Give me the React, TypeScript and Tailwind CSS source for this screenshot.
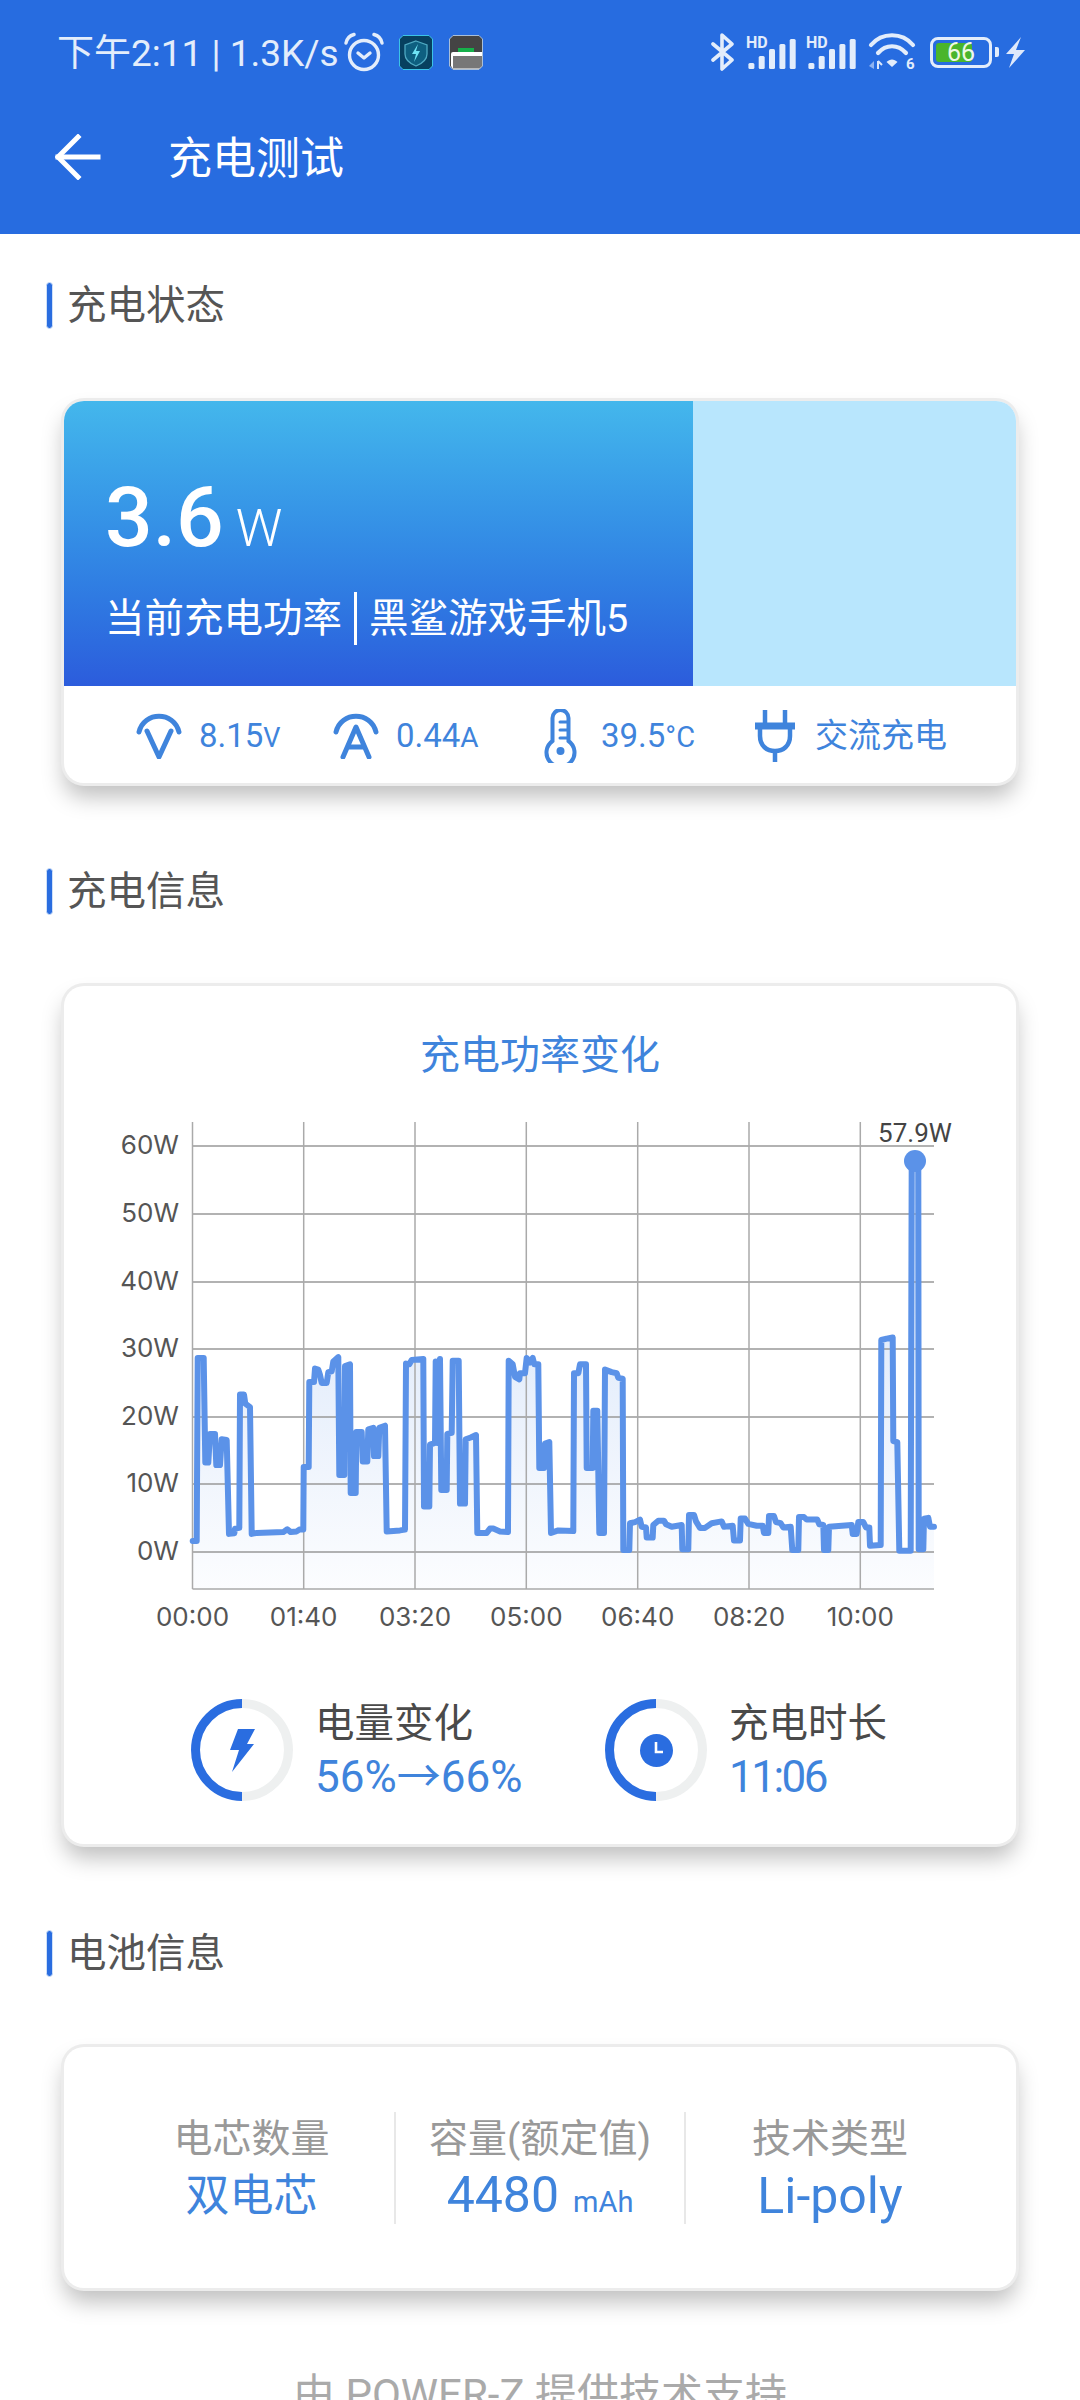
import { ReactNode } from 'react';

const SANS = 'font-["Roboto","Noto_Sans_CJK_SC",sans-serif]';

// Trace read off the reference, in crop units: x = 100 + cx / 3, y = 1100 + cy / 2.8
const LEFT_TRACE = [
  278, 1235, 290, 1235, 293, 722, 311, 722, 316, 1015, 325, 1015, 330, 935, 345, 935, 349, 1022, 360, 1022, 365, 950,
  380, 952, 387, 1215, 403, 1213, 405, 1200, 418, 1198, 420, 825, 432, 825, 436, 850, 450, 860, 455, 1215, 470, 1212,
  550, 1210, 562, 1202, 572, 1210, 590, 1208, 598, 1203, 610, 1203, 611, 1028, 626, 1028, 628, 790, 642, 790, 645, 752,
  655, 755, 660, 770, 665, 792, 680, 792, 685, 762, 695, 760, 700, 732, 715, 720, 718, 1050, 733, 1050, 735, 745, 750,
  740, 752, 1100, 767, 1100, 769, 930, 785, 930, 788, 1012, 802, 1012, 805, 922, 820, 918, 822, 997, 835, 997, 838, 918,
  855, 912, 860, 1208, 900, 1205, 915, 1203, 918, 738, 928, 740, 935, 728, 970, 725, 972, 1138, 988, 1138, 990, 965,
  1005, 960, 1007, 732, 1012, 960, 1020, 725, 1024, 1092, 1040, 1092, 1042, 935, 1055, 932, 1058, 730, 1076, 730, 1080,
  1130, 1095, 1130, 1097, 950, 1112, 945, 1128, 938, 1132, 1212, 1160, 1212, 1170, 1200, 1180, 1200, 1200, 1208, 1224,
  1210, 1226, 730, 1238, 740, 1245, 775, 1258, 782, 1260, 765, 1275, 765, 1280, 722, 1290, 735, 1298, 722, 1303, 740,
  1315, 740, 1318, 1030,
];
// Same trace from the right-hand crop: x = 540 + cx / 3
const RIGHT_TRACE = [
  12, 1030, 15, 962, 28, 958, 33, 1212, 55, 1205, 100, 1207, 102, 765, 115, 765, 120, 740, 138, 740, 140, 1030, 158,
  1030, 160, 870, 172, 870, 178, 1212, 192, 1212, 195, 755, 215, 762, 230, 765, 235, 778, 248, 780, 250, 1260, 268, 1260,
  270, 1185, 285, 1182, 300, 1175, 305, 1195, 318, 1197, 320, 1225, 338, 1225, 340, 1190, 355, 1178, 372, 1178, 378,
  1188, 395, 1195, 425, 1190, 427, 1258, 445, 1258, 447, 1162, 462, 1162, 468, 1180, 480, 1198, 495, 1198, 515, 1185,
  545, 1180, 552, 1195, 578, 1192, 582, 1233, 600, 1233, 602, 1172, 615, 1172, 625, 1187, 650, 1192, 668, 1192, 672,
  1212, 685, 1212, 687, 1165, 702, 1165, 708, 1182, 722, 1185, 730, 1197, 752, 1195, 757, 1260, 775, 1260, 777, 1168,
  792, 1168, 800, 1175, 832, 1175, 838, 1188, 850, 1190, 852, 1260, 865, 1260, 867, 1195, 935, 1190, 938, 1215, 950,
  1215, 955, 1182, 970, 1182, 978, 1197, 988, 1197, 990, 1248, 1022, 1246, 1024, 672, 1040, 668, 1058, 665, 1060, 955,
  1072, 958, 1078, 1262, 1112, 1262, 1115, 170, 1135, 170, 1136, 1258, 1150, 1258, 1152, 1172, 1165, 1170, 1170, 1195,
  1182, 1195,
];

// The svg starts at page x=64, y=1110
const CHART_X = (px: number) => px - 64;
const CHART_Y = (py: number) => py - 1110;

function tracePoints(): string {
  const out: string[] = [];
  for (let i = 0; i < LEFT_TRACE.length; i += 2) {
    out.push(`${CHART_X(100 + LEFT_TRACE[i] / 3).toFixed(1)},${CHART_Y(1100 + LEFT_TRACE[i + 1] / 2.8).toFixed(1)}`);
  }
  for (let i = 0; i < RIGHT_TRACE.length; i += 2) {
    out.push(`${CHART_X(540 + RIGHT_TRACE[i] / 3).toFixed(1)},${CHART_Y(1100 + RIGHT_TRACE[i + 1] / 2.8).toFixed(1)}`);
  }
  return out.join(' ');
}

const GRID_Y = [
  { y: 1146, label: '60W' },
  { y: 1214, label: '50W' },
  { y: 1282, label: '40W' },
  { y: 1349, label: '30W' },
  { y: 1417, label: '20W' },
  { y: 1484, label: '10W' },
  { y: 1552, label: '0W' },
];
const GRID_X = [
  { x: 192.5, label: '00:00' },
  { x: 303.7, label: '01:40' },
  { x: 415, label: '03:20' },
  { x: 526.3, label: '05:00' },
  { x: 637.7, label: '06:40' },
  { x: 749, label: '08:20' },
  { x: 860.3, label: '10:00' },
];

function PowerChart() {
  const pts = tracePoints();
  const left = CHART_X(192.5);
  const right = CHART_X(934);
  const axis = CHART_Y(1589);
  const area = `${left},${axis} ${pts} ${right},${axis}`;
  return (
    <svg width={952} height={530} viewBox="0 0 952 530" className="block mt-[31px]">
      <defs>
        <linearGradient id="areaFill" x1="0" y1="0" x2="0" y2="1">
          <stop offset="0" stopColor="#5b92e8" stopOpacity="0.28" />
          <stop offset="1" stopColor="#5b92e8" stopOpacity="0.02" />
        </linearGradient>
      </defs>
      <polygon points={area} fill="url(#areaFill)" />
      {GRID_Y.map((g) => (
        <g key={g.label}>
          <line x1={left} x2={right} y1={CHART_Y(g.y)} y2={CHART_Y(g.y)} stroke="#999" strokeWidth="1.5" />
          <text x={CHART_X(179)} y={CHART_Y(g.y) + 8} textAnchor="end" fontSize="26" fill="#555" fontFamily="Inter, sans-serif">
            {g.label}
          </text>
        </g>
      ))}
      {GRID_X.map((g) => (
        <g key={g.label}>
          <line x1={CHART_X(g.x)} x2={CHART_X(g.x)} y1={CHART_Y(1122)} y2={axis} stroke="#aaa" strokeWidth="1.5" />
          <text x={CHART_X(g.x)} y={CHART_Y(1626)} textAnchor="middle" fontSize="26" fill="#555" fontFamily="Inter, sans-serif">
            {g.label}
          </text>
        </g>
      ))}
      <line x1={left} x2={right} y1={axis} y2={axis} stroke="#aaa" strokeWidth="1.5" />
      <polyline points={pts} fill="none" stroke="#5b92e8" strokeWidth="6" strokeLinejoin="round" strokeLinecap="round" />
      <circle cx={CHART_X(915)} cy={CHART_Y(1161)} r="11" fill="#5b92e8" />
      <text x={CHART_X(915)} y={CHART_Y(1142)} textAnchor="middle" fontSize="26" fill="#444" fontFamily="Roboto, sans-serif">
        57.9W
      </text>
    </svg>
  );
}

function SectionTitle({ children, className }: { children: ReactNode; className: string }) {
  return (
    <div className={`flex h-[47px] items-center pl-[46px] ${className}`}>
      <span className="h-[47px] w-[7px] rounded-full border border-[#cfe0f8] bg-[#2a6de0]" />
      <span className="ml-[14px] text-[39.5px] leading-none text-[#555]">{children}</span>
    </div>
  );
}

function Card({ children, className = '' }: { children: ReactNode; className?: string }) {
  return (
    <div
      className={`mx-[64px] w-[952px] overflow-hidden rounded-[20px] bg-white shadow-[0_0_0_3px_#ececec,0_14px_22px_rgba(0,0,0,0.25)] ${className}`}
    >
      {children}
    </div>
  );
}

function AlarmIcon() {
  return (
    <svg width="40" height="40" viewBox="0 0 40 40" fill="none" stroke="#e3edfb" strokeWidth="3.4" strokeLinecap="round" strokeLinejoin="round">
      <circle cx="20" cy="23" r="14.5" />
      <path d="M2 11 C3 6 6 3.5 10 2.5" />
      <path d="M38 11 C37 6 34 3.5 30 2.5" />
      <path d="M14 21 L20 26 L26 21" />
    </svg>
  );
}

function ShieldApp() {
  return (
    <svg width="34" height="35" viewBox="0 0 34 35">
      <path d="M4 .5 H30 L33.5 4 V31 L30 34.5 H4 L.5 31 V4 Z" fill="#07405f" stroke="#3cc3e6" strokeWidth="1" />
      <path d="M17 6 L28 10 V19 C28 25 22 29 17 31 C12 29 6 25 6 19 V10 Z" fill="#0e5f80" stroke="#4fa9c2" strokeWidth="1.3" />
      <path d="M19 9 L13 19 H17 L15 27 L21 16 H17 Z" fill="#6fe3f5" />
    </svg>
  );
}

function FolderApp() {
  return (
    <svg width="34" height="35" viewBox="0 0 34 35">
      <path d="M4 .5 H30 L33.5 4 V31 L30 34.5 H4 L.5 31 V4 Z" fill="#444" stroke="#a9bfd9" strokeWidth="1" />
      <rect x="9" y="13" width="16" height="5" fill="#16b04a" />
      <path d="M2 19 Q2 17 4 17 H33 V31 L30 34 H4 L2 31 Z" fill="#fff" />
      <path d="M4 21 H33 V31 L30 33.5 H4 Z" fill="#777" />
    </svg>
  );
}

function SignalIcon() {
  const bars = [
    [2.4, 29],
    [12.7, 22],
    [23, 15],
    [33.4, 10],
    [43.7, 5],
  ];
  return (
    <svg className="overflow-visible" width="50" height="36" viewBox="0 0 50 36">
      <text x="0" y="14" fontSize="16" fontWeight="700" fill="#e3edfb" fontFamily="Roboto, sans-serif">
        HD
      </text>
      {bars.map(([x, top]) => (
        <rect key={x} x={x} y={top} width="6" height={35 - top} rx="1.5" fill="#e3edfb" />
      ))}
    </svg>
  );
}

function WifiIcon() {
  return (
    <svg className="overflow-visible" width="47" height="38" viewBox="0 0 47 38" fill="none">
      <path d="M2 12 C13 -1 33 -1 44 12" stroke="#e3edfb" strokeWidth="4.2" strokeLinecap="round" />
      <path d="M9 20 C17 11 29 11 37 20" stroke="#e3edfb" strokeWidth="4.2" strokeLinecap="round" />
      <path d="M17.5 29 L23 34 L28.5 29 C25 25.5 21 25.5 17.5 29 Z" fill="#e3edfb" />
      <path d="M0 33 L5 28 V36 Z" fill="#8fb3f0" />
      <path d="M9 28 V36 M9 28 L13 32" stroke="#dbe7fb" strokeWidth="2" />
      <text x="37" y="36" fontSize="15" fontWeight="700" fill="#e3edfb" fontFamily="Roboto, sans-serif">
        6
      </text>
    </svg>
  );
}

function StatusBar() {
  return (
    <div className="flex h-[104px] items-center pl-[57px] pr-[55px] text-[#e3edfb]">
      <span className="mt-[2px] whitespace-pre text-[37px] leading-none">下午2:11 | 1.3K/s</span>
      <div className="ml-[5px] flex items-center">
        <AlarmIcon />
        <span className="ml-[15px]">
          <ShieldApp />
        </span>
        <span className="ml-[16px]">
          <FolderApp />
        </span>
      </div>
      <div className="ml-auto flex items-center">
        <svg width="24" height="40" viewBox="0 0 24 40" fill="none" stroke="#e3edfb" strokeWidth="3.6" strokeLinecap="round" strokeLinejoin="round">
          <path d="M2 12 L21 28 L11 37 V3 L21 12 L2 28" />
        </svg>
        <span className="ml-[11px]">
          <SignalIcon />
        </span>
        <span className="ml-[10px]">
          <SignalIcon />
        </span>
        <span className="ml-[13px]">
          <WifiIcon />
        </span>
        <div className="relative ml-[14px] flex h-[31px] w-[62px] items-center rounded-[8px] border-[3px] border-[#e3edfb]">
          <div className="ml-[3px] h-[19px] w-[36px] rounded-[3px] bg-[#4ab52c]" />
          <span className="absolute inset-0 flex items-center justify-center text-[25px] leading-none text-[#eef9e6]">66</span>
        </div>
        <div className="ml-[3px] h-[10px] w-[4px] rounded-r-[2px] bg-[#e3edfb]" />
        <svg className="ml-[7px]" width="19" height="31" viewBox="0 0 19 31">
          <path d="M15 0 L0 17 H8 L3 31 L19 13 H10 Z" fill="#dfe9fb" />
        </svg>
      </div>
    </div>
  );
}

function Header() {
  return (
    <header className="h-[234px] bg-[#276ce0]">
      <StatusBar />
      <div className="flex h-[106px] items-center pl-[55px]">
        <svg width="46" height="46" viewBox="0 0 46 46" fill="none" stroke="#fff" strokeWidth="5" strokeLinecap="square">
          <path d="M3 23 H43" />
          <path d="M23 3 L3 23 L23 43" />
        </svg>
        <span className="ml-[67px] mt-[3px] text-[44px] leading-none text-white">充电测试</span>
      </div>
    </header>
  );
}

function StatItem({ icon, children, width }: { icon: ReactNode; children: ReactNode; width: string }) {
  return (
    <div className={`flex items-center ${width}`}>
      {icon}
      {children}
    </div>
  );
}

function ChargingStatus() {
  return (
    <Card className="mt-[72px]">
      <div className="flex h-[285px]">
        <div className="w-[629px] bg-gradient-to-b from-[#44b7ec] to-[#2c5cdc] pl-[41px] text-white">
          <div className="mt-[75px] flex h-[84px] items-baseline">
            <span className="text-[84px] font-medium leading-[84px]">3.6</span>
            <span className="ml-[12px] text-[52px] font-light leading-none">W</span>
          </div>
          <div className="mt-[32px] flex items-center text-[39.5px] leading-none">
            <span>当前充电功率</span>
            <span className="mx-[12px] h-[53px] w-[3px] bg-white" />
            <span>黑鲨游戏手机5</span>
          </div>
        </div>
        <div className="flex-1 bg-[#b8e6fd]" />
      </div>
      <div className="flex h-[97px] items-center pl-[72px] pt-[2px] text-[#3f84dc]">
        <StatItem
          width="w-[197px]"
          icon={
            <svg className="mr-[17px]" width="46" height="46" viewBox="0 0 46 46" fill="none" stroke="#3f84dc" strokeWidth="5" strokeLinecap="round" strokeLinejoin="round">
              <path d="M3 19 C8 -2 38 -2 43 19" />
              <path d="M11 18 L23 44 L35 18" />
            </svg>
          }
        >
          <span className="text-[33px] leading-none">
            8.15<span className="text-[27px]">V</span>
          </span>
        </StatItem>
        <StatItem
          width="w-[211px]"
          icon={
            <svg className="mr-[17px]" width="46" height="46" viewBox="0 0 46 46" fill="none" stroke="#3f84dc" strokeWidth="5" strokeLinecap="round" strokeLinejoin="round">
              <path d="M3 19 C8 -2 38 -2 43 19" />
              <path d="M10 44 L23 14 L36 44 M15 34 H31" />
            </svg>
          }
        >
          <span className="text-[33px] leading-none">
            0.44<span className="text-[28px]">A</span>
          </span>
        </StatItem>
        <StatItem
          width="w-[209px]"
          icon={
            <svg className="mr-[24px]" width="33" height="54" viewBox="0 0 33 54" fill="none" stroke="#3f84dc" strokeWidth="4" strokeLinecap="round">
              <path d="M8.5 32 V9 a8 8 0 0 1 16 0 V32 a14 14 0 1 1 -16 0 Z" />
              <circle cx="16.5" cy="42" r="4" fill="#3f84dc" stroke="none" />
              <path d="M16 13 H24 M16 21 H24 M16 29 H24" strokeWidth="3" />
            </svg>
          }
        >
          <span className="text-[33px] leading-none">
            39.5<span className="text-[29px]">°C</span>
          </span>
        </StatItem>
        <StatItem
          width=""
          icon={
            <svg className="mr-[18px]" width="44" height="52" viewBox="0 0 44 52" fill="none" stroke="#3f84dc" strokeWidth="4.5">
              <path d="M12 0 V14 M32 0 V14" />
              <path d="M2 16 H42" strokeWidth="7" />
              <path d="M7 19 V26 C7 36 14 41 22 41 C30 41 37 36 37 26 V19" />
              <path d="M22 41 V52" />
            </svg>
          }
        >
          <span className="text-[33px] leading-none">交流充电</span>
        </StatItem>
      </div>
    </Card>
  );
}

function Ring({ children }: { children: ReactNode }) {
  return (
    <div className="relative h-[102px] w-[102px] shrink-0">
      <svg width="102" height="102" viewBox="0 0 102 102" fill="none" strokeWidth="9">
        <path d="M51 4.5 A46.5 46.5 0 0 1 51 97.5" stroke="#eef0f0" />
        <path d="M51 4.5 A46.5 46.5 0 0 0 51 97.5" stroke="#2a6de0" />
      </svg>
      <div className="absolute inset-0 flex items-center justify-center">{children}</div>
    </div>
  );
}

function RingStat({
  icon,
  label,
  value,
  className,
  valueClass = '',
}: {
  icon: ReactNode;
  label: string;
  value: string;
  className: string;
  valueClass?: string;
}) {
  return (
    <div className={`flex items-center gap-[22px] ${className}`}>
      <Ring>{icon}</Ring>
      <div>
        <div className="text-[39.5px] leading-[46px] text-[#4a4a4a]">{label}</div>
        <div className={`mt-[7px] text-[44px] leading-[46px] text-[#3f84dc] ${valueClass}`}>{value}</div>
      </div>
    </div>
  );
}

function ChargingInfo() {
  return (
    <Card className="mt-[71px] h-[858px]">
      <div className="pt-[47px] text-center text-[40px] leading-[46px] text-[#3f84dc]">充电功率变化</div>
      <PowerChart />
      <div className="mt-[59px] flex pl-[127px]">
        <RingStat
          className="w-[414px]"
          label="电量变化"
          value="56%→66%"
          icon={
            <svg width="25" height="43" viewBox="0 0 25 43">
              <path d="M8 0 H25 L17 15 H24 L2 43 L9 21 H0 Z" fill="#2a6de0" />
            </svg>
          }
        />
        <RingStat
          className=""
          label="充电时长"
          value="11:06"
          valueClass="tracking-[-2.5px]"
          icon={
            <svg width="33" height="33" viewBox="0 0 33 33">
              <circle cx="16.5" cy="16.5" r="16.5" fill="#2a6de0" />
              <path d="M16 8 V18 H23" fill="none" stroke="#fff" strokeWidth="2.6" />
            </svg>
          }
        />
      </div>
    </Card>
  );
}

function BatteryCell({
  label,
  children,
  width,
  valueClass,
  divider,
}: {
  label: string;
  children: ReactNode;
  width: string;
  valueClass: string;
  divider?: boolean;
}) {
  return (
    <div className={`flex h-[112px] flex-col items-center justify-between ${width} ${divider ? 'border-r-2 border-[#e8e8e8]' : ''}`}>
      <div className="mt-[4px] text-[39px] leading-[46px] text-[#999]">{label}</div>
      <div className={`flex items-baseline text-[#3f84dc] ${valueClass}`}>{children}</div>
    </div>
  );
}

function BatteryInfo() {
  return (
    <Card className="mt-[70px] flex h-[241px] items-center">
      <div className="ml-[45px] flex">
        <BatteryCell label="电芯数量" width="w-[287px]" valueClass="mb-[3px]" divider>
          <span className="text-[44px] leading-[50px]">双电芯</span>
        </BatteryCell>
        <BatteryCell label="容量(额定值)" width="w-[290px]" valueClass="mb-[-3px]" divider>
          <span className="text-[50px] leading-[50px]">4480</span>
          <span className="ml-[14px] text-[29px] leading-[50px]">mAh</span>
        </BatteryCell>
        <BatteryCell label="技术类型" width="w-[288px]" valueClass="mb-[3px]">
          <span className="text-[50px] leading-[50px]">Li-poly</span>
        </BatteryCell>
      </div>
    </Card>
  );
}

export default function App() {
  return (
    <div className={`h-[2400px] w-[1080px] overflow-hidden bg-white ${SANS}`}>
      <Header />
      <SectionTitle className="mt-[48px]">充电状态</SectionTitle>
      <ChargingStatus />
      <SectionTitle className="mt-[85px]">充电信息</SectionTitle>
      <ChargingInfo />
      <SectionTitle className="mt-[86px]">电池信息</SectionTitle>
      <BatteryInfo />
      <div className="mt-[84px] text-center text-[42px] leading-[46px] text-[#aaa]">由 POWER-Z 提供技术支持</div>
    </div>
  );
}
